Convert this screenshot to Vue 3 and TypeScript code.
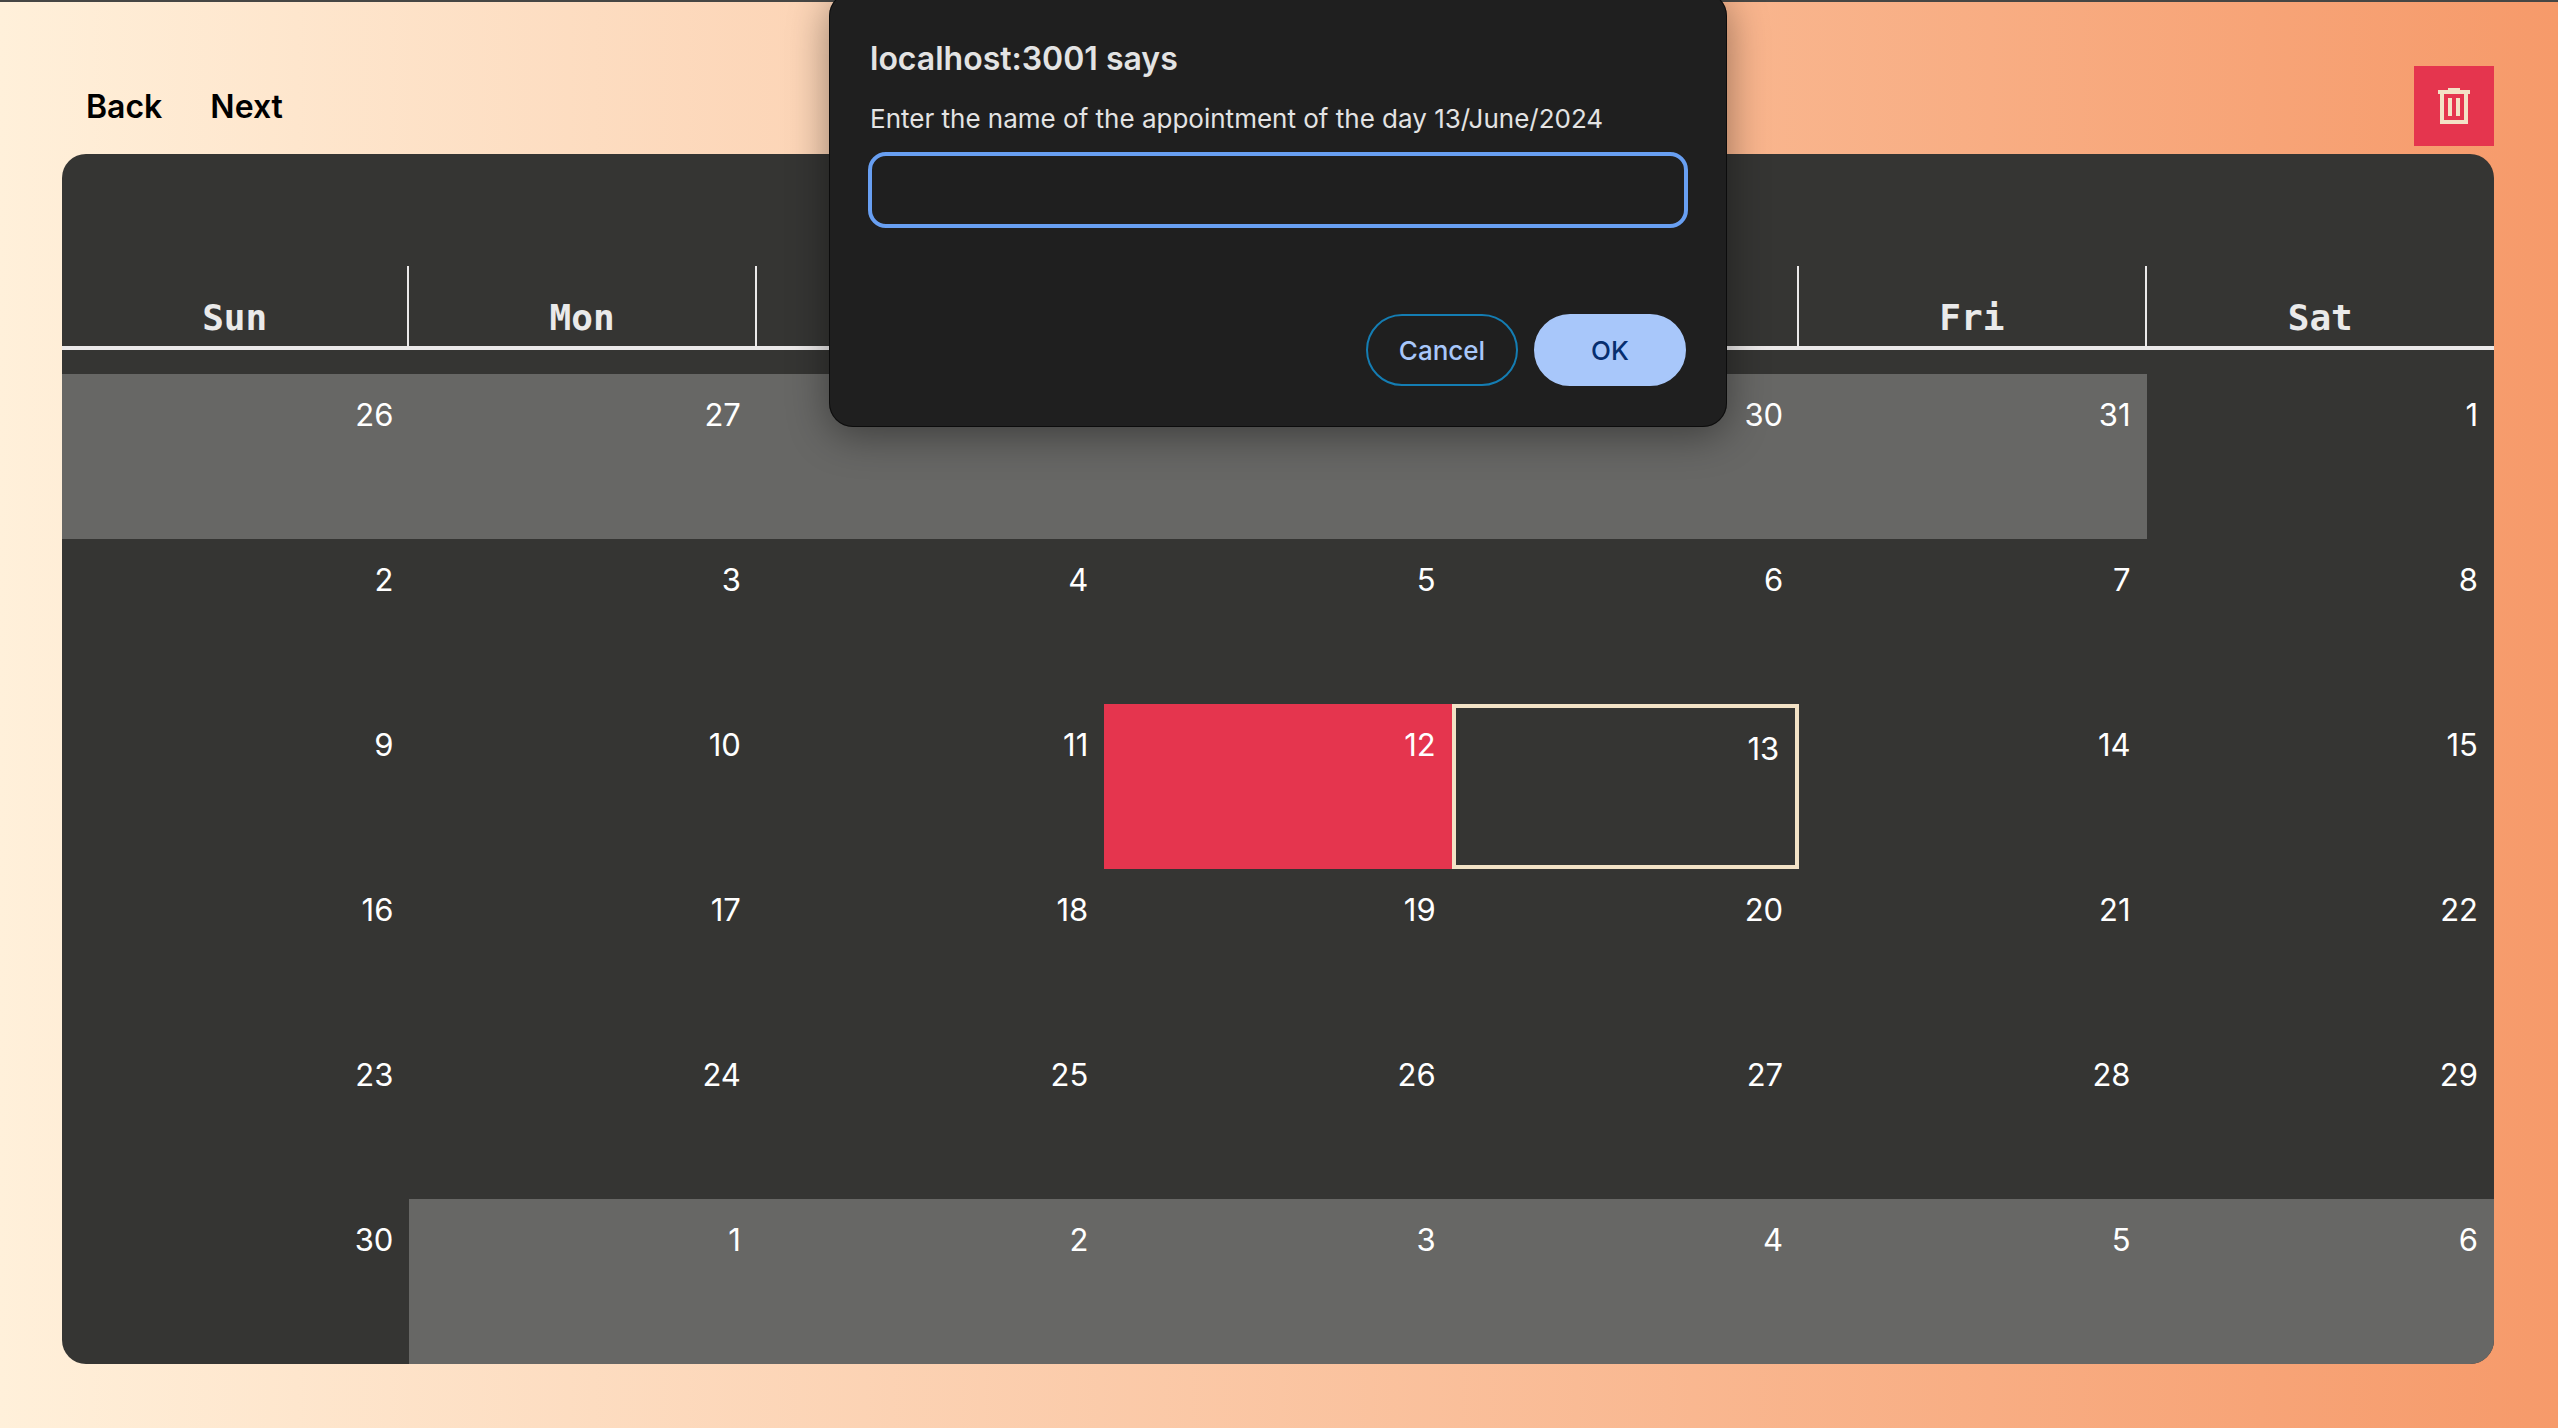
<script setup lang="ts">
import { ref } from 'vue'

interface Day {
  n: number
  kind: '' | 'other' | 'today' | 'selected'
}

const weekdays = ['Sun', 'Mon', 'Tue', 'Wed', 'Thu', 'Fri', 'Sat']
const appointment = ref('')

// Six full weeks, starting on Sunday 26 May 2024.
const start = new Date(2024, 4, 26)
const weeks: Day[][] = Array.from({ length: 6 }, (_, w) =>
  Array.from({ length: 7 }, (_, d) => {
    const date = new Date(start.getFullYear(), start.getMonth(), start.getDate() + w * 7 + d)
    const n = date.getDate()
    let kind: Day['kind'] = ''
    if (date.getMonth() !== 5) kind = 'other'
    else if (n === 12) kind = 'today'
    else if (n === 13) kind = 'selected'
    return { n, kind }
  })
)
</script>

<template>
  <main class="page">
    <header class="toolbar">
      <nav class="nav">
        <button type="button" class="nav-btn">Back</button>
        <button type="button" class="nav-btn">Next</button>
      </nav>
      <button type="button" class="trash" aria-label="Delete">
        <svg width="32" height="36" viewBox="0 0 32 36" fill="currentColor" shape-rendering="crispEdges">
          <path fill-rule="evenodd" d="M10 0h12v2h10v4h-2v30H2V6H0V2h10zM6 6v26h20V6z" />
          <path d="M10 10h4v18h-4zM18 10h4v18h-4z" />
        </svg>
      </button>
    </header>

    <table class="calendar">
      <thead>
        <tr>
          <th v-for="name in weekdays" :key="name" scope="col">{{ name }}</th>
        </tr>
      </thead>
      <tbody>
        <tr v-for="(week, w) in weeks" :key="w">
          <td v-for="(day, d) in week" :key="d" :class="day.kind">{{ day.n }}</td>
        </tr>
      </tbody>
    </table>

    <form class="prompt" role="dialog" aria-labelledby="prompt-title" @submit.prevent>
      <h1 id="prompt-title" class="prompt-title">localhost:3001 says</h1>
      <label class="prompt-label" for="appointment">Enter the name of the appointment of the day 13/June/2024</label>
      <input id="appointment" v-model="appointment" class="prompt-input" type="text" />
      <div class="prompt-actions">
        <button type="button" class="pill">Cancel</button>
        <button type="submit" class="pill primary">OK</button>
      </div>
    </form>
  </main>
</template>

<style>
body {
  margin: 0;
}
</style>

<style scoped>
.page {
  position: relative;
  box-sizing: border-box;
  min-height: 100vh;
  padding: 64px 64px 64px 62px;
  border-top: 2px solid #464644;
  background: linear-gradient(90deg, #fff0da, #f69a6a);
  font-family: Inter, "Liberation Sans", sans-serif;
}

button {
  margin: 0;
  border: 0;
  font-family: inherit;
}

.toolbar {
  display: flex;
  align-items: center;
  justify-content: space-between;
  margin-bottom: 8px;
}

.nav {
  display: flex;
}

.nav-btn {
  padding: 2px 24px 0;
  background: none;
  color: #000;
  font-size: 32px;
  font-weight: 600;
  line-height: 40px;
}

.trash {
  display: flex;
  align-items: center;
  justify-content: center;
  width: 80px;
  height: 80px;
  padding: 0;
  background: #e5354e;
  color: #f3e2c6;
}

.calendar {
  display: block;
  border-radius: 24px;
  overflow: hidden;
  background: #353533;
}

thead {
  display: block;
  padding-top: 112px;
  margin-bottom: 24px;
  border-bottom: 4px solid #ebe9e9;
}

tbody {
  display: block;
}

tr {
  display: grid;
  grid-template-columns: repeat(7, 1fr);
}

th {
  padding: 32px 0 8px;
  border-right: 2px solid #ebe9e9;
  color: #eaeaea;
  font: 700 36px/40px "DejaVu Sans Mono", monospace;
  text-align: center;
}

th:last-child {
  border-right: 0;
}

td {
  box-sizing: border-box;
  height: 165px;
  padding: 22px 16px;
  color: #fff;
  font-size: 31px;
  line-height: 38px;
  text-align: right;
}

.other {
  background: #676765;
}

.today {
  background: #e5354e;
}

.selected {
  border: 4px solid #f3e2c6;
}

.prompt {
  position: absolute;
  top: -10px;
  left: 50%;
  box-sizing: border-box;
  width: 898px;
  margin-left: -450px;
  padding: 47px 39px 41px;
  border-radius: 24px;
  background: #1f1f1f;
  box-shadow: inset 0 0 0 1px rgba(0, 0, 0, 0.6), 0 8px 40px rgba(0, 0, 0, 0.4);
  color: #e3e3e3;
}

.prompt-title {
  margin: 0 2px;
  font-size: 32px;
  font-weight: 600;
  line-height: 40px;
}

.prompt-label {
  display: block;
  margin: 23px 2px 16px;
  font-size: 26px;
  line-height: 34px;
}

.prompt-input {
  display: block;
  box-sizing: border-box;
  width: 100%;
  height: 76px;
  padding: 0 20px;
  border: 4px solid #689ff2;
  border-radius: 18px;
  outline: 0;
  background: transparent;
  color: inherit;
  font: 26px/34px Inter, sans-serif;
}

.prompt-actions {
  display: flex;
  justify-content: flex-end;
  gap: 16px;
  margin: 86px 2px 0;
}

.pill {
  box-sizing: border-box;
  width: 152px;
  height: 72px;
  padding: 0;
  border: 2px solid #147db3;
  border-radius: 36px;
  background: none;
  color: #a8c7fa;
  font-size: 26px;
  font-weight: 500;
}

.primary {
  border-color: #a8c7fa;
  background: #a8c7fa;
  color: #062e6f;
}
</style>
